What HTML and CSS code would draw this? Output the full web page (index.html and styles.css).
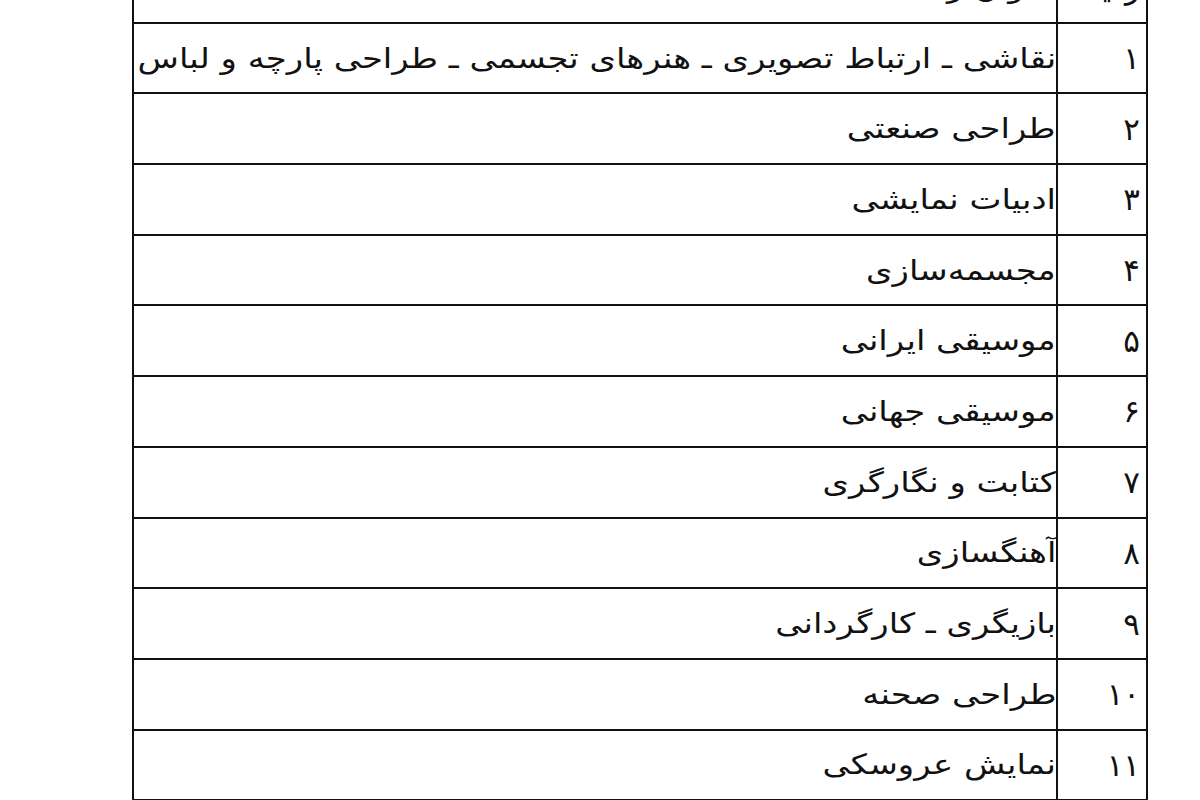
FILE: index.html
```html
<!DOCTYPE html>
<html lang="fa" dir="rtl">
<head>
<meta charset="utf-8">
<link rel="stylesheet" href="styles.css">
</head>
<body>
<table class="fields">
<tr class="head"><td class="num">ردیف</td><td class="name"><span class="label">عنوان رشته</span></td></tr>
<tr><td class="num">۱</td><td class="name"><span class="label">نقاشی ـ ارتباط تصویری ـ هنرهای تجسمی ـ طراحی پارچه و لباس</span></td></tr>
<tr><td class="num">۲</td><td class="name"><span class="label">طراحی صنعتی</span></td></tr>
<tr><td class="num">۳</td><td class="name"><span class="label">ادبیات نمایشی</span></td></tr>
<tr><td class="num">۴</td><td class="name"><span class="label">مجسمه‌سازی</span></td></tr>
<tr><td class="num">۵</td><td class="name"><span class="label">موسیقی ایرانی</span></td></tr>
<tr><td class="num">۶</td><td class="name"><span class="label">موسیقی جهانی</span></td></tr>
<tr><td class="num">۷</td><td class="name"><span class="label">کتابت و نگارگری</span></td></tr>
<tr><td class="num">۸</td><td class="name"><span class="label">آهنگسازی</span></td></tr>
<tr><td class="num">۹</td><td class="name"><span class="label">بازیگری ـ کارگردانی</span></td></tr>
<tr><td class="num">۱۰</td><td class="name"><span class="label">طراحی صحنه</span></td></tr>
<tr><td class="num">۱۱</td><td class="name"><span class="label">نمایش عروسکی</span></td></tr>
</table>
</body>
</html>
```
FILE: styles.css
```css
html, body {
  margin: 0;
  padding: 0;
  background: #fff;
  overflow: hidden;
}
body {
  font-family: "DejaVu Sans", "Noto Sans", sans-serif;
  color: #111;
}
.fields {
  border-collapse: collapse;
  margin-top: -49px;
  margin-right: 52px;
  width: 1016px;
  table-layout: fixed;
}
.fields td {
  border: 2px solid #111;
  height: 68.7px;
  padding: 0;
  vertical-align: middle;
  white-space: nowrap;
  overflow: hidden;
}
.fields .num {
  width: 82px;
  padding-right: 6px;
  text-align: right;
  font-size: 31px;
}
.fields .name {
  text-align: right;
  padding-right: 0;
  font-size: 28px;
}
.label {
  display: inline-block;
  transform: scaleX(1.21);
  transform-origin: right center;
}
```
